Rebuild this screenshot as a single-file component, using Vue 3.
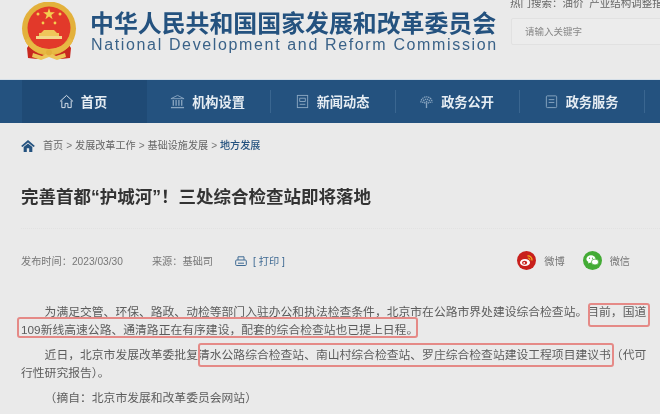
<script setup>
const navItems = [
  { label: '首页', icon: 'home', active: true },
  { label: '机构设置', icon: 'bank' },
  { label: '新闻动态', icon: 'news' },
  { label: '政务公开', icon: 'signal' },
  { label: '政务服务', icon: 'doc' },
];
const crumbs = ['首页', '发展改革工作', '基础设施发展'];
</script>

<template>
  <div class="page">
    <header class="top">
      <svg class="emblem" width="56" height="60" viewBox="0 0 56 60">
        <path d="M10 40 L6 46 L7 56 L16 57 L28 54 L40 57 L49 56 L50 46 L46 40 Z" fill="#c9281f" />
        <circle cx="28" cy="26.5" r="27" fill="#e3b13c" />
        <circle cx="28" cy="26" r="21.5" fill="#e2392a" />
        <polygon points="28,6 29.4,10.3 33.9,10.3 30.3,13 31.6,17.2 28,14.6 24.4,17.2 25.7,13 22.1,10.3 26.6,10.3" fill="#f4cf4f" />
        <circle cx="17" cy="12" r="1.5" fill="#f4cf4f" />
        <circle cx="39" cy="12" r="1.5" fill="#f4cf4f" />
        <circle cx="22" cy="21" r="1.4" fill="#f4cf4f" />
        <circle cx="34" cy="21" r="1.4" fill="#f4cf4f" />
        <path d="M20 31 L23 28 H33 L36 31 H38 V34 H18 V31 Z" fill="#efc65a" />
        <rect x="15" y="34" width="26" height="3" fill="#f3d88a" />
        <path d="M7 36 Q13 46 28 47 Q43 46 49 36 L52 39 Q45 52 28 52 Q11 52 4 39 Z" fill="#e8b944" />
        <path d="M12 51 L21 54 L28 50 L35 54 L44 51 L45 55 L36 58 L28 55 L20 58 L11 55 Z" fill="#ecc558" />
        <circle cx="28" cy="50.5" r="3" fill="#e3b13c" />
      </svg>
      <div class="brand">
        <div class="brand-cn">中华人民共和国国家发展和改革委员会</div>
        <div class="brand-en">National Development and Reform Commission</div>
      </div>
      <div class="search-area">
        <div class="hot">热门搜索：油价&nbsp;&nbsp;产业结构调整指导目录</div>
        <div class="search-box">请输入关键字</div>
      </div>
    </header>

    <nav class="nav">
      <div v-for="item in navItems" :key="item.label" class="nav-item" :class="{ active: item.active }">
        <svg class="nav-icon" width="15" height="15" viewBox="0 0 16 16" fill="none" stroke="currentColor" stroke-width="1">
          <template v-if="item.icon === 'home'">
            <path d="M1 8 L8 1.5 L15 8" />
            <path d="M3 7 V14.5 H6.5 V10 H9.5 V14.5 H13 V7" />
          </template>
          <template v-else-if="item.icon === 'bank'">
            <path d="M1 5 L8 1.5 L15 5 Z" />
            <path d="M3.5 6.5 V12.5 M6.5 6.5 V12.5 M9.5 6.5 V12.5 M12.5 6.5 V12.5" stroke-width="1.4" />
            <path d="M1 14.5 H15" stroke-width="1.4" />
          </template>
          <template v-else-if="item.icon === 'news'">
            <rect x="2.5" y="1.5" width="11" height="13" />
            <path d="M5 4.5 H11 V8 H5 Z M5 11 H11" />
          </template>
          <template v-else-if="item.icon === 'signal'">
            <path d="M2 9 A6 6 0 0 1 14 9 M4 9.5 A4 4 0 0 1 12 9.5 M6 10 A2 2 0 0 1 10 10" stroke-dasharray="1.4 0.8" stroke-width="1.4" />
            <path d="M8 9 V15" stroke-width="1.4" />
          </template>
          <template v-else>
            <rect x="2.5" y="2" width="11" height="12.5" rx="1" />
            <path d="M5 6 H11 M5 9 H11" />
          </template>
        </svg>
        <span>{{ item.label }}</span>
      </div>
    </nav>

    <div class="crumbs">
      <svg class="crumb-home" width="14" height="12" viewBox="0 0 15 13">
        <path d="M7.5 0 L15 6.6 L13.4 7.6 L7.5 2.6 L1.6 7.6 L0 6.6 Z" fill="#24527f" />
        <path d="M2.8 7.6 L7.5 3.8 L12.2 7.6 V13 H8.8 V9 H6.2 V13 H2.8 Z" fill="#24527f" />
      </svg>
      <template v-for="c in crumbs" :key="c">
        <span>{{ c }}</span><span class="sep">&gt;</span>
      </template>
      <span class="crumb-current">地方发展</span>
    </div>

    <h1 class="title">完善首都“护城河”！三处综合检查站即将落地</h1>

    <div class="meta">
      <span class="date">发布时间：2023/03/30</span>
      <span class="source">来源：基础司</span>
      <svg class="print-icon" width="12" height="11" viewBox="0 0 12 11" fill="none" stroke="#3f6a93" stroke-width="1">
        <path d="M3 4 V0.8 H9 V4" />
        <rect x="0.7" y="4" width="10.6" height="5.5" rx="1" />
        <path d="M3 7.2 H9" />
      </svg>
      <span class="print">[ 打印 ]</span>
      <div class="share">
        <svg width="19" height="19" viewBox="0 0 19 19">
          <circle cx="9.5" cy="9.5" r="9.5" fill="#c8201c" />
          <ellipse cx="8" cy="11.5" rx="5" ry="3.6" fill="#fff" />
          <ellipse cx="7.6" cy="11.7" rx="2.6" ry="2" fill="#c8201c" />
          <circle cx="7.2" cy="11.9" r="0.9" fill="#fff" />
          <path d="M10.5 5 A4 4 0 0 1 15 9.5" fill="none" stroke="#f3b21f" stroke-width="1.3" />
          <path d="M10.8 7 A2 2 0 0 1 13 9.2" fill="none" stroke="#f3b21f" stroke-width="1" />
        </svg>
        <span class="share-label">微博</span>
        <svg class="wechat" width="19" height="19" viewBox="0 0 19 19">
          <circle cx="9.5" cy="9.5" r="9.5" fill="#43ab35" />
          <ellipse cx="8" cy="8" rx="4.6" ry="3.7" fill="#fff" />
          <path d="M5.5 10.5 L5 12.6 L7.6 11.2 Z" fill="#fff" />
          <ellipse cx="12" cy="11" rx="3.6" ry="2.9" stroke="#43ab35" stroke-width="0.7" fill="#fff" />
          <circle cx="6.5" cy="7.2" r="0.6" fill="#43ab35" />
          <circle cx="9.5" cy="7.2" r="0.6" fill="#43ab35" />
        </svg>
        <span class="share-label">微信</span>
      </div>
    </div>

    <article class="article">
      <p class="indent">为满足交管、环保、路政、动检等部门入驻办公和执法检查条件，北京市在公路市界处建设综合检查站。目前，国道109新线高速公路、通清路正在有序建设，配套的综合检查站也已提上日程。</p>
      <p class="indent">近日，北京市发展改革委批复清水公路综合检查站、南山村综合检查站、罗庄综合检查站建设工程项目建议书（代可行性研究报告）。</p>
      <p class="indent">（摘自：北京市发展和改革委员会网站）</p>
      <div class="mark mark-a"></div>
      <div class="mark mark-b"></div>
      <div class="mark mark-c"></div>
    </article>
  </div>
</template>

<style>
html, body {
  margin: 0;
  background: #eaeaea;
}
</style>

<style scoped>
.page {
  width: 660px;
  height: 414px;
  overflow: hidden;
  background: #eaeaea;
  font-family: "Liberation Sans", "Noto Sans CJK SC", sans-serif;
  color: #666;
  filter: blur(0.35px);
}

.top {
  height: 79px;
  display: flex;
  align-items: flex-start;
  padding-left: 21px;
  box-sizing: border-box;
}

.emblem {
  margin-top: 2px;
  flex: none;
}

.brand {
  margin-left: 13px;
  width: 411px;
  flex: none;
  padding-top: 12px;
}

.brand-cn {
  font-size: 23.9px;
  line-height: 24px;
  font-weight: 700;
  color: #24527f;
  white-space: nowrap;
}

.brand-en {
  font-size: 16px;
  line-height: 18px;
  letter-spacing: 1.64px;
  color: #3a6288;
  white-space: nowrap;
  margin-left: 1px;
}

.search-area {
  margin-left: 9px;
  flex: none;
  width: 150px;
  margin-top: -4px;
}

.hot {
  font-size: 10.5px;
  line-height: 14px;
  color: #666;
  white-space: nowrap;
}

.search-box {
  margin-top: 8px;
  margin-left: 1px;
  height: 27px;
  width: 170px;
  box-sizing: border-box;
  background: #ececec;
  border: 1px solid #e1e1e1;
  border-radius: 2px;
  padding-left: 13px;
  font-size: 9.5px;
  line-height: 25px;
  color: #888;
}

.nav {
  height: 44px;
  display: flex;
  padding-left: 22px;
  background: #24527f;
  border-top: 1px solid #d5dfe8;
  box-sizing: border-box;
}

.nav-item {
  width: 124.5px;
  flex: none;
  box-sizing: border-box;
  padding-right: 2.5px;
  display: flex;
  align-items: center;
  justify-content: center;
  gap: 7px;
  color: #e6edf3;
  font-size: 13.2px;
  font-weight: 700;
  position: relative;
}

.nav-item::after {
  content: "";
  position: absolute;
  right: 0;
  top: 10px;
  bottom: 10px;
  width: 1px;
  background: #3a6690;
}

.nav-item.active {
  background: #1f4a75;
}

.nav-item.active::after {
  display: none;
}

.nav-icon {
  color: #8aa6c1;
  flex: none;
}

.nav-item.active .nav-icon {
  color: #dfe8f0;
}

.crumbs {
  display: flex;
  align-items: center;
  height: 14px;
  margin-top: 16px;
  padding-left: 21px;
  font-size: 10.1px;
  line-height: 14px;
  color: #666;
}

.crumb-home {
  margin-right: 8px;
}

.sep {
  margin: 0 3px;
  color: #777;
}

.crumb-current {
  color: #24527f;
  font-weight: 500;
}

.title {
  margin: 31px 0 0 21px;
  padding-bottom: 18px;
  border-bottom: 1px dotted #e2e2e2;
  font-size: 17.5px;
  line-height: 26px;
  font-weight: 700;
  color: #333;
}

.meta {
  margin-top: 21px;
  height: 20px;
  padding: 0 30px 0 21px;
  display: flex;
  align-items: center;
  font-size: 10.2px;
  color: #777;
}

.source {
  margin-left: 29px;
}

.print-icon {
  margin-left: 22px;
  margin-top: 2px;
}

.print {
  margin-left: 6px;
  color: #3f6a93;
}

.share {
  margin-left: auto;
  display: flex;
  align-items: center;
}

.share-label {
  margin-left: 8px;
}

.wechat {
  margin-left: 18px;
}

.article {
  position: relative;
  margin-top: 33px;
  padding: 0 12px 0 21px;
  font-size: 11.8px;
  line-height: 18px;
  color: #5c5c5c;
}

.article p {
  margin: 0 0 7px;
}

.indent {
  text-indent: 2em;
}

.mark {
  position: absolute;
  border: 2px solid #e58a87;
  border-radius: 3px;
  box-sizing: border-box;
}

.mark-a {
  left: 588px;
  top: 0;
  width: 62px;
  height: 24px;
}

.mark-b {
  left: 17px;
  top: 14px;
  width: 401px;
  height: 21px;
}

.mark-c {
  left: 198px;
  top: 40px;
  width: 416px;
  height: 24px;
}
</style>
